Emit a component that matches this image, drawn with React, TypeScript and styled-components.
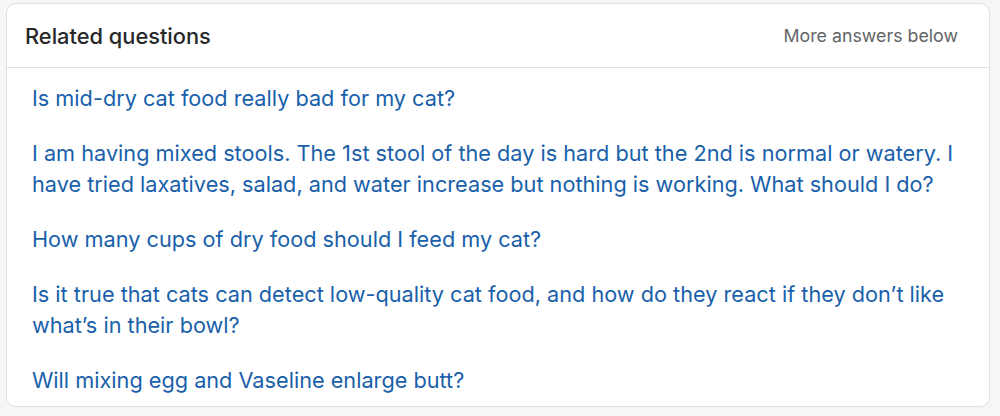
import React from "react";
import styled, { createGlobalStyle } from "styled-components";

const Global = createGlobalStyle`
  html, body { margin: 0; padding: 0; background: #f6f6f6; }
  body { font-family: Inter, "Helvetica Neue", Arial, sans-serif; -webkit-font-smoothing: antialiased; }
`;

const Page = styled.div`
  padding: 3px 10px 8px 6px;
`;

const Card = styled.section`
  background: #fff;
  border: 1px solid #dee0e1;
  border-radius: 10px;
  height: 404px;
  box-sizing: border-box;
  display: flex;
  flex-direction: column;
  overflow: hidden;
`;

const Header = styled.header`
  height: 64px;
  display: flex;
  align-items: center;
  justify-content: space-between;
  padding: 0 31px 0 18px;
  border-bottom: 1px solid #dee0e1;
  box-sizing: border-box;
`;

const Title = styled.h2`
  margin: 0;
  font-size: 21.8px;
  font-weight: 500;
  color: #282829;
`;

const Aside = styled.span`
  font-size: 17.8px;
  color: #636466;
`;

const List = styled.ul`
  list-style: none;
  margin: 0;
  padding: 15px 20px 0 25px;
  display: flex;
  flex-direction: column;
  gap: 24px;
`;

const Item = styled.li`
  font-size: 21.7px;
  line-height: 31px;
  color: #195faa;
`;

const questions = [
  "Is mid-dry cat food really bad for my cat?",
  "I am having mixed stools. The 1st stool of the day is hard but the 2nd is normal or watery. I have tried laxatives, salad, and water increase but nothing is working. What should I do?",
  "How many cups of dry food should I feed my cat?",
  "Is it true that cats can detect low-quality cat food, and how do they react if they don\u2019t like what\u2019s in their bowl?",
  "Will mixing egg and Vaseline enlarge butt?",
];

export default function App() {
  return (
    <Page>
      <Global />
      <Card>
        <Header>
          <Title>Related questions</Title>
          <Aside>More answers below</Aside>
        </Header>
        <List>
          {questions.map((q) => (
            <Item key={q}>{q}</Item>
          ))}
        </List>
      </Card>
    </Page>
  );
}
